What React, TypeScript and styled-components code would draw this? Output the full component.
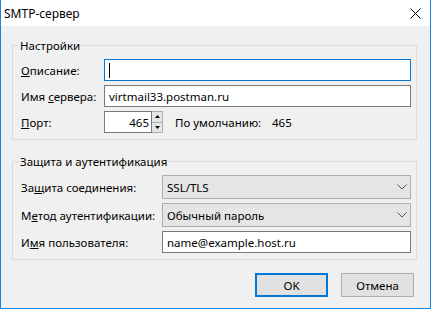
import styled, { createGlobalStyle } from "styled-components";

const GlobalStyle = createGlobalStyle`
html, body {
  margin: 0;
  padding: 0;
  background: #ffffff;
}
body {
  font-family: "Noto Sans", "Segoe UI", sans-serif;
  font-size: 11.5px;
  color: #000;
}
`;

const Window = styled.div`
width: 431px;
height: 309px;
box-sizing: border-box;
border: 1px solid #1883d7;
border-top: none;
display: flex;
flex-direction: column;
`;

const TitleBar = styled.div`
height: 26px;
flex-shrink: 0;
background: #ffffff;
display: flex;
align-items: center;
justify-content: space-between;
padding: 0 9px 0 3px;
`;

const Title = styled.span`
font-size: 12px;
`;

const Body = styled.div`
flex: 1;
background: #f0f0f0;
padding: 12px 13px 0 11px;
display: flex;
flex-direction: column;
`;

const Group = styled.fieldset<{ $top?: number }>`
margin: ${(p) => p.$top ?? 0}px 0 0 0;
padding: 6px 5px 6px 8px;
border: 1px solid #dcdcdc;
min-width: 0;
`;

const Legend = styled.legend`
padding: 0 1px;
margin-left: -2px;
line-height: 15px;
`;

const Grid = styled.div<{ $label: number }>`
display: grid;
grid-template-columns: ${(p) => p.$label}px 1fr;
row-gap: 4px;
align-items: center;
`;

const Label = styled.label`
white-space: nowrap;
`;

const TextBox = styled.div<{ $focused?: boolean; $width?: number; $right?: boolean }>`
height: 22px;
box-sizing: border-box;
width: ${(p) => (p.$width ? `${p.$width}px` : "auto")};
border: 1px solid ${(p) => (p.$focused ? "#0078d7" : "#7a7a7a")};
background: #ffffff;
display: flex;
align-items: center;
justify-content: ${(p) => (p.$right ? "flex-end" : "flex-start")};
padding: 0 2px 0 4px;
white-space: nowrap;
overflow: hidden;
`;

const Caret = styled.span`
width: 1px;
height: 15px;
background: #000;
`;

const PortRow = styled.div`
display: flex;
align-items: center;
`;

const Spinner = styled.div`
width: 11px;
height: 22px;
display: flex;
flex-direction: column;
`;

const SpinButton = styled.div`
flex: 1;
background: #e5e5e5;
border: 1px solid #adadad;
border-left: none;
display: flex;
align-items: center;
justify-content: center;
& + & {
  border-top: none;
}
`;

const DefaultLabel = styled.span`
margin-left: 12px;
width: 97px;
`;

const Combo = styled.div`
height: 24px;
box-sizing: border-box;
border: 1px solid #adadad;
background: #e5e5e5;
display: flex;
align-items: center;
justify-content: space-between;
padding: 0 3px 0 4px;
`;

const ButtonRow = styled.div`
display: flex;
justify-content: flex-end;
gap: 13px;
margin: 13px 3px 0 0;
`;

const Button = styled.button<{ $default?: boolean }>`
width: 73px;
height: 24px;
box-sizing: border-box;
background: #e1e1e1;
border: ${(p) => (p.$default ? "2px solid #0078d7" : "1px solid #adadad")};
font-family: inherit;
font-size: 11.5px;
color: #000;
padding: 0;
`;

const Chevron = () => (
  <svg width="10" height="6" viewBox="0 0 10 6">
    <path d="M0.5 0.5 L5 5 L9.5 0.5" fill="none" stroke="#555" strokeWidth="1" />
  </svg>
);

const Arrow = ({ up }: { up?: boolean }) => (
  <svg width="5" height="3" viewBox="0 0 5 3">
    <path d={up ? "M0 3 L2.5 0 L5 3 Z" : "M0 0 L2.5 3 L5 0 Z"} fill="#000" />
  </svg>
);

export default function App() {
  return (
    <>
      <GlobalStyle />
      <Window>
        <TitleBar>
          <Title>SMTP-сервер</Title>
          <svg width="11" height="11" viewBox="0 0 11 11">
            <path d="M0.5 0.5 L10.5 10.5 M10.5 0.5 L0.5 10.5" stroke="#000" strokeWidth="1" />
          </svg>
        </TitleBar>
        <Body>
          <Group>
            <Legend>Настройки</Legend>
            <Grid $label={83}>
              <Label><u>О</u>писание:</Label>
              <TextBox $focused><Caret /></TextBox>
              <Label>Имя <u>с</u>ервера:</Label>
              <TextBox>virtmail33.postman.ru</TextBox>
              <Label><u>П</u>орт:</Label>
              <PortRow>
                <TextBox $width={48} $right>465</TextBox>
                <Spinner>
                  <SpinButton><Arrow up /></SpinButton>
                  <SpinButton><Arrow /></SpinButton>
                </Spinner>
                <DefaultLabel>По умолчанию:</DefaultLabel>
                <span>465</span>
              </PortRow>
            </Grid>
          </Group>
          <Group $top={14}>
            <Legend>Защита и аутентификация</Legend>
            <Grid $label={141}>
              <Label>За<u>щ</u>ита соединения:</Label>
              <Combo>SSL/TLS<Chevron /></Combo>
              <Label>М<u>е</u>тод аутентификации:</Label>
              <Combo>Обычный пароль<Chevron /></Combo>
              <Label>И<u>м</u>я пользователя:</Label>
              <TextBox>name@example.host.ru</TextBox>
            </Grid>
          </Group>
          <ButtonRow>
            <Button $default>OK</Button>
            <Button>Отмена</Button>
          </ButtonRow>
        </Body>
      </Window>
    </>
  );
}
